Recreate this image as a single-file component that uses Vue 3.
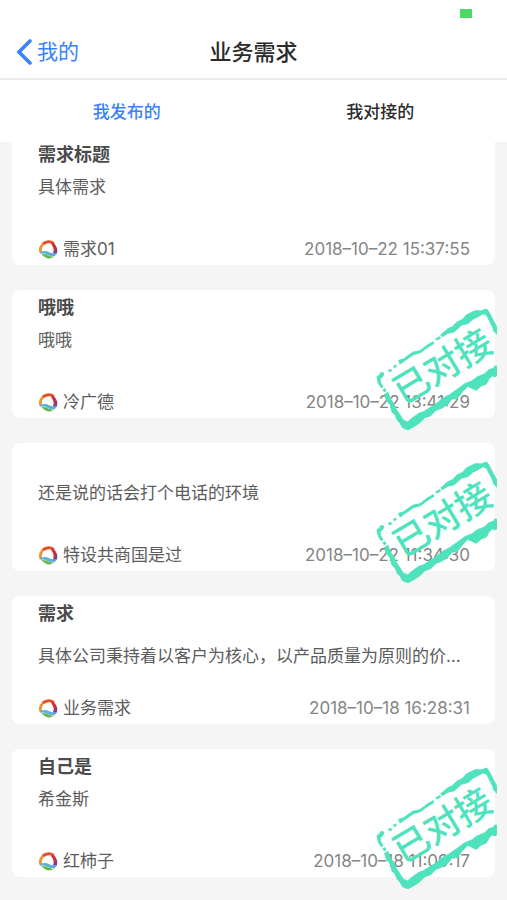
<template>
  <div class="page">
    <header class="top">
      <div class="status-bar"><span class="battery"></span></div>
      <div class="nav-bar">
        <button class="back" type="button">
          <svg class="back-icon" viewBox="0 0 16 26" aria-hidden="true">
            <path d="M14 2 L3 13 L14 24" fill="none" stroke="currentColor" stroke-width="3.6" stroke-linecap="round" />
          </svg>
          <span>我的</span>
        </button>
        <h1 class="nav-title">业务需求</h1>
      </div>
      <nav class="tabs">
        <button
          v-for="tab in tabs"
          :key="tab.key"
          type="button"
          class="tab"
          :class="{ active: tab.key === current }"
          @click="current = tab.key"
        >{{ tab.name }}</button>
      </nav>
    </header>

    <main class="list">
      <article v-for="item in list" :key="item.time" class="card">
        <h2 class="card-title">{{ item.title }}</h2>
        <p class="card-desc" :class="{ long: item.desc.length > 20 }">{{ item.desc }}</p>
        <div class="card-foot">
          <svg class="logo" viewBox="0 0 54 54" aria-hidden="true">
            <path d="M6 37 A23 23 0 0 1 17 7" fill="none" stroke="#f0932c" stroke-width="8" />
            <path d="M12 11 A23 23 0 0 1 42 10" fill="none" stroke="#e2502c" stroke-width="8" />
            <path d="M38 6 Q54 17 51 35 L40 38 Q45 25 35 13 Z" fill="#cf2f35" />
            <path d="M50 20 Q55 32 48 42 L39 38 Q47 32 50 20" fill="#7b3f9b" />
            <path d="M3 35 Q18 27 29 35 Q39 40 50 37 L45 46 Q34 48 23 42 Q14 37 4 39 Z" fill="#5cb0dc" />
            <path d="M7 40 Q20 39 28 45 Q34 48 43 47 Q25 61 7 40" fill="#66b54b" />
          </svg>
          <span class="name">{{ item.name }}</span>
          <time class="time">{{ item.time }}</time>
        </div>
        <svg v-if="item.done" class="stamp" viewBox="48 54 363 372" role="img" aria-label="已对接">
          <g class="stamp-border">
            <path d="M116 211 L130 207 L158 187 L180 182 L202 165 L220 155 L221 161 L204 171 L181 188 L160 194 L136 211 L120 222 Z" />
            <path d="M227 147 L238 140 L242 144 L231 150 Z" />
            <path d="M242 135 L264 116 L278 110 L290 97 L308 88 L319 75 L346 62 L363 63 L380 57 L387 67 L411 113 L411 133 L402 124 L398 111 L380 76 L369 71 L354 80 L338 88 L325 100 L304 106 L283 125 L263 130 L247 140 Z" />
            <path d="M51 260 L58 256 L63 247 L72 250 L68 260 L60 266 L61 277 L69 290 L64 293 L55 280 Z" />
            <path d="M86 240 L93 238 L94 244 L88 245 Z M101 228 L107 225 L109 230 L103 233 Z M69 299 L75 296 L78 302 L72 305 Z" />
            <path d="M74 313 L84 307 L90 325 L100 339 L108 357 L122 378 L130 391 L143 396 L158 383 L177 370 L191 365 L208 354 L228 342 L248 325 L269 314 L289 300 L315 281 L337 272 L351 261 L373 252 L387 239 L401 235 L404 228 L411 229 L411 257 L402 261 L397 257 L387 266 L379 282 L363 288 L349 301 L332 293 L323 289 L306 307 L291 326 L276 327 L264 342 L246 354 L228 361 L212 377 L194 383 L181 397 L168 406 L156 413 L144 419 L128 413 L120 399 L112 391 L105 374 L96 366 L91 345 L79 330 Z" />
          </g>
          <text class="stamp-text" transform="translate(247 229) rotate(-31)" x="0" y="39" text-anchor="middle">已对接</text>
        </svg>
      </article>
    </main>
  </div>
</template>

<script setup>
import { ref } from 'vue'

// 顶部选项卡
const tabs = [
  { key: 'publish', name: '我发布的' },
  { key: 'docking', name: '我对接的' }
]
const current = ref('publish')

// 需求列表，done 表示已对接
const list = ref([
  { title: '需求标题', desc: '具体需求', name: '需求01', time: '2018–10–22 15:37:55', done: false },
  { title: '哦哦', desc: '哦哦', name: '冷广德', time: '2018–10–22 13:41:29', done: true },
  { title: '', desc: '还是说的话会打个电话的环境', name: '特设共商国是过', time: '2018–10–22 11:34:30', done: true },
  {
    title: '需求',
    desc: '具体公司秉持着以客户为核心，以产品质量为原则的价…',
    name: '业务需求',
    time: '2018–10–18 16:28:31',
    done: false
  },
  { title: '自己是', desc: '希金斯', name: '红柿子', time: '2018–10–18 11:09:17', done: true }
])
</script>

<style>
body {
  margin: 0;
  background: #f5f5f5;
}
</style>

<style scoped>
.page {
  min-height: 100vh;
  overflow: hidden;
  background: #f5f5f5;
  color: #5c5c5c;
  font-family: Inter, "Noto Sans CJK SC", sans-serif;
}

.top {
  position: relative;
  z-index: 2;
  background: #fff;
}

.status-bar {
  display: flex;
  justify-content: flex-end;
  height: 26px;
  padding: 0 35px;
}

.battery {
  width: 12px;
  height: 9px;
  margin-top: 9px;
  background: #4cd964;
}

.nav-bar {
  display: grid;
  grid-template-columns: 1fr auto 1fr;
  align-items: center;
  height: 52px;
  padding: 0 16px;
  border-bottom: 2px solid #ebebeb;
}

button {
  padding: 0;
  border: 0;
  background: none;
  font-family: inherit;
  cursor: pointer;
}

.back {
  display: flex;
  align-items: center;
  gap: 5px;
  color: #3b82f7;
  font-size: 21px;
  line-height: 30px;
}

.back-icon {
  width: 16px;
  height: 26px;
}

.nav-title {
  margin: 0;
  color: #2b2b2b;
  font-size: 22px;
  font-weight: 500;
  line-height: 30px;
}

.tabs {
  display: flex;
  height: 62px;
}

.tab {
  flex: 1;
  padding-bottom: 2px;
  color: #2b2b2b;
  font-size: 17px;
  font-weight: 500;
}

.tab.active {
  color: #3b82f7;
}

/* 列表滚动后首张卡片被顶部遮住一点 */
.list {
  display: flex;
  flex-direction: column;
  gap: 25px;
  margin-top: -5px;
  padding: 0 12px 24px;
}

.card {
  position: relative;
  display: flex;
  flex-direction: column;
  height: 128px;
  padding: 0 25px 0 26px;
  box-sizing: border-box;
  border-radius: 8px;
  background: #fff;
}

.card-title {
  height: 34px;
  margin: 0;
  color: #4a4a4a;
  font-size: 18px;
  font-weight: 700;
  line-height: 35px;
}

.card-desc {
  height: 52px;
  margin: 0;
  overflow: hidden;
  font-size: 17px;
  line-height: 32px;
  white-space: nowrap;
  text-overflow: ellipsis;
}

.card-desc.long {
  line-height: 52px;
}

.card-foot {
  display: flex;
  align-items: center;
  height: 24px;
  margin-top: 14px;
  font-size: 17px;
  line-height: 24px;
}

.logo {
  width: 19px;
  height: 19px;
  margin: 0 5px 0 1px;
}

.time {
  margin-left: auto;
  color: #858585;
}

.stamp {
  position: absolute;
  top: 18px;
  right: -2px;
  width: 121px;
  height: 124px;
}

.stamp-border {
  fill: #4fe3bd;
  stroke: #4fe3bd;
  stroke-width: 3px;
  stroke-linejoin: round;
}

.stamp-text {
  fill: #4fe3bd;
  font-family: "Noto Sans CJK SC", sans-serif;
  font-size: 108px;
  font-weight: 500;
}
</style>
